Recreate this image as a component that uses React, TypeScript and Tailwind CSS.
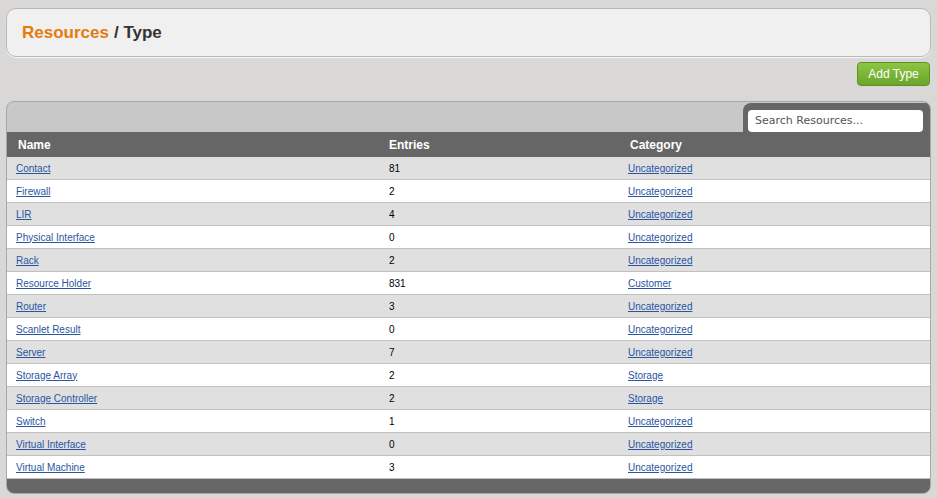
import React from "react";

const rows: [string, string, string][] = [
  ["Contact", "81", "Uncategorized"],
  ["Firewall", "2", "Uncategorized"],
  ["LIR", "4", "Uncategorized"],
  ["Physical Interface", "0", "Uncategorized"],
  ["Rack", "2", "Uncategorized"],
  ["Resource Holder", "831", "Customer"],
  ["Router", "3", "Uncategorized"],
  ["Scanlet Result", "0", "Uncategorized"],
  ["Server", "7", "Uncategorized"],
  ["Storage Array", "2", "Storage"],
  ["Storage Controller", "2", "Storage"],
  ["Switch", "1", "Uncategorized"],
  ["Virtual Interface", "0", "Uncategorized"],
  ["Virtual Machine", "3", "Uncategorized"],
];

export default function App() {
  return (
    <div className="w-[937px] h-[498px] bg-[#d9d8d6] pt-[8px] px-[6px] overflow-hidden" style={{ fontFamily: '"Liberation Sans", Arial, sans-serif' }}>
      <div className="h-[49px] w-[925px] rounded-[10px] border border-[#b8b8b8] bg-[#f0f0f0] flex items-center pl-[15px] shadow-[0_1px_1px_rgba(255,255,255,0.8)]">
        <span className="text-[17px] font-bold text-[#e57b0f]">Resources</span>
        <span className="text-[17px] font-bold text-[#333] ml-[5px]">/ Type</span>
      </div>
      <div className="flex justify-end mt-[5px] pr-[1px]">
        <button className="h-[24px] w-[73px] rounded-[4px] border border-[#5c8f26] bg-gradient-to-b from-[#8cc641] to-[#6aa52e] text-white text-[12px]">Add Type</button>
      </div>
      <div className="mt-[15px] w-[925px] rounded-[8px] overflow-hidden border border-[#a8a8a8] bg-[#c8c8c8]">
        <div className="h-[30px] flex justify-end">
          <div className="w-[187px] bg-[#666] rounded-tl-[8px] mt-[1px] pl-[5px] pt-[7px]">
            <div className="w-[175px] h-[22px] bg-white rounded-[4px] text-[12px] text-[#555] pl-[7px] flex items-center" style={{ fontFamily: '"DejaVu Sans", sans-serif', fontSize: 11 }}>Search Resources...</div>
          </div>
        </div>
        <div className="h-[25px] bg-[#666] grid grid-cols-[371px_241px_1fr] items-center text-white font-bold text-[12px] pl-[11px]">
          <div>Name</div><div>Entries</div><div>Category</div>
        </div>
        {rows.map((r, i) => (
          <div key={r[0]} className={`h-[23px] grid grid-cols-[371px_241px_1fr] items-center text-[10px] pl-[9px] border-b border-[#c0c0c0] ${i % 2 === 0 ? "bg-[#e0e0e0]" : "bg-white"}`}>
            <a className="underline text-[#2a55a0] cursor-pointer">{r[0]}</a>
            <div className="text-black pl-[2px]">{r[1]}</div>
            <a className="underline text-[#2a55a0] cursor-pointer">{r[2]}</a>
          </div>
        ))}
        <div className="h-[14px] bg-[#666]"></div>
      </div>
    </div>
  );
}
